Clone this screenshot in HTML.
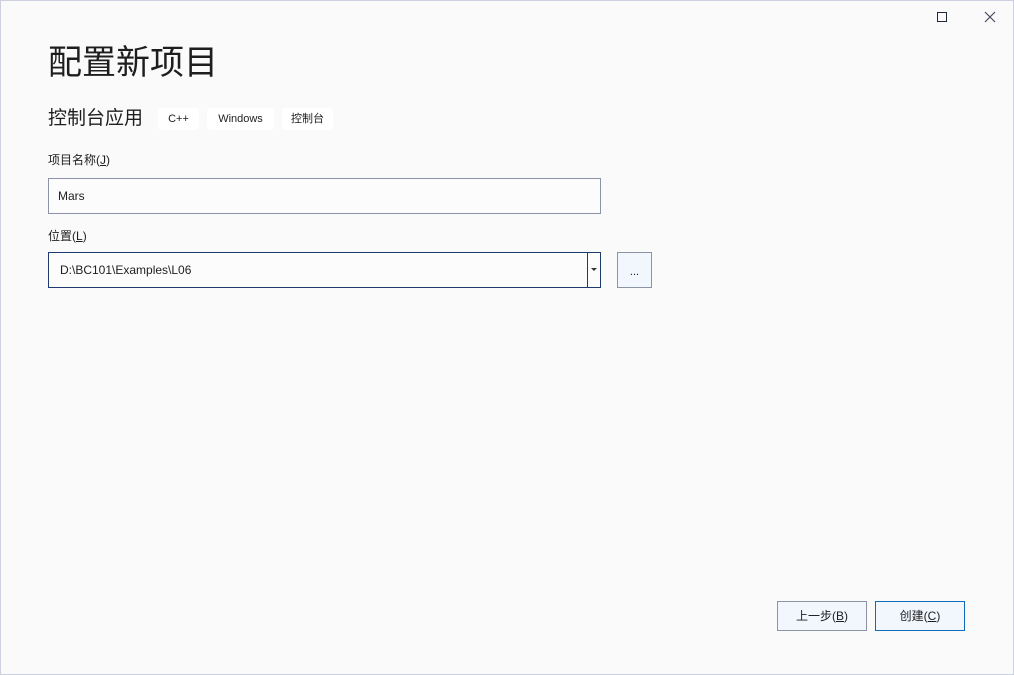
<!DOCTYPE html>
<html><head><meta charset="utf-8"><style>
*{margin:0;padding:0;box-sizing:border-box}
body{width:1014px;height:675px;background:#fafafb;font-family:"Liberation Sans","Noto Sans CJK SC",sans-serif;color:#1e1e1e;position:relative;overflow:hidden}
.a{position:absolute}
.tag{position:absolute;top:108px;height:22px;background:#fff;border-radius:4px;font-size:11px;line-height:22px;text-align:center}
.box{position:absolute;border:1px solid #8a94a6;background:#fcfcfc;font-size:12px;padding-left:9px}
.btn{position:absolute;top:601px;height:30px;width:90px;background:#f2f6fd;border:1px solid #8a94a6;font-size:12px;text-align:center;line-height:28px}
u{text-decoration:underline}
</style></head><body>
<div class="a" style="left:0;top:0;width:1014px;height:675px;border:1px solid #ccd0e0"></div>
<div class="a" style="left:937px;top:12px;width:10px;height:10px;border:1.5px solid #1e2a3a"></div>
<svg class="a" style="left:984px;top:11px" width="12" height="12"><path d="M1 1L11 11M11 1L1 11" stroke="#444c5c" stroke-width="1.2"/></svg>
<div class="a" style="left:48px;top:41px;font-size:34px;line-height:44px">配置新项目</div>
<div class="a" style="left:48px;top:106px;font-size:19px;line-height:26px">控制台应用</div>
<div class="tag" style="left:158px;width:41px">C++</div>
<div class="tag" style="left:207px;width:67px">Windows</div>
<div class="tag" style="left:282px;width:51px">控制台</div>
<div class="a" style="left:48px;top:151px;font-size:12px">项目名称(<u>J</u>)</div>
<div class="box" style="left:48px;top:178px;width:553px;height:36px;line-height:34px">Mars</div>
<div class="a" style="left:48px;top:227px;font-size:12px">位置(<u>L</u>)</div>
<div class="box" style="left:48px;top:252px;width:553px;height:36px;line-height:34px;border-color:#1f3a6e;padding-left:11px">D:\BC101\Examples\L06</div>
<div class="a" style="left:587px;top:253px;width:1px;height:34px;background:#1f3a6e"></div>
<div class="a" style="left:591px;top:268px;border-left:3px solid transparent;border-right:3px solid transparent;border-top:3px solid #333"></div>
<div class="a" style="left:617px;top:252px;width:35px;height:36px;background:#f2f6fd;border:1px solid #8a94a6;font-size:11px;text-align:center;line-height:38px">...</div>
<div class="btn" style="left:777px">上一步(<u>B</u>)</div>
<div class="btn" style="left:875px;border-color:#0f6cbd">创建(<u>C</u>)</div>
</body></html>
